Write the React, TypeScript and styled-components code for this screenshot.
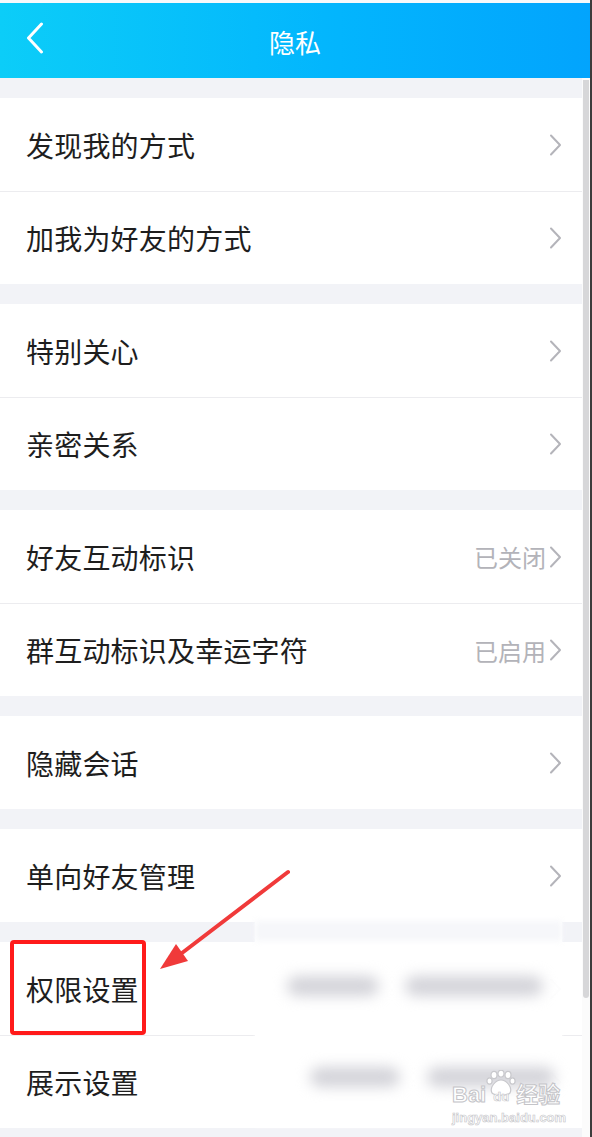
import React from "react";
import styled, { createGlobalStyle } from "styled-components";

interface RowData {
  label: string;
  value?: string;
}

const sections: RowData[][] = [
  [{ label: "发现我的方式" }, { label: "加我为好友的方式" }],
  [{ label: "特别关心" }, { label: "亲密关系" }],
  [
    { label: "好友互动标识", value: "已关闭" },
    { label: "群互动标识及幸运字符", value: "已启用" },
  ],
  [{ label: "隐藏会话" }],
  [{ label: "单向好友管理" }],
  [{ label: "权限设置" }, { label: "展示设置" }],
];

const Chevron = () => (
  <svg width="13" height="22" viewBox="0 0 13 22">
    <path d="M2 1.5 L11 11 L2 20.5" fill="none" stroke="#b4b4ba" strokeWidth="2" strokeLinecap="round" strokeLinejoin="round" />
  </svg>
);

const App = () => {
  return (
    <>
      <GlobalStyle />
      <StFrame>
        <StTopStrip />
        <StHeader>
          <StBack>
            <svg width="18" height="32" viewBox="0 0 18 32">
              <path d="M15.5 2 L2.5 16 L15.5 30" fill="none" stroke="#fff" strokeWidth="3" strokeLinecap="round" strokeLinejoin="round" />
            </svg>
          </StBack>
          <StTitle>隐私</StTitle>
        </StHeader>

        <StBody>
          <StContent>
            {sections.map((rows, i) => (
              <StSection key={i}>
                {rows.map((row, j) => (
                  <StRow key={row.label} $divider={j > 0}>
                    <StLabel>{row.label}</StLabel>
                    <StRight>
                      {row.value && <StValue>{row.value}</StValue>}
                      <Chevron />
                    </StRight>
                  </StRow>
                ))}
              </StSection>
            ))}
          </StContent>
          <StTrack>
            <StThumb />
          </StTrack>
        </StBody>

        {/* 가려진 영역 */}
        <StMask>
          <StMaskBand />
          <StBlurLine $top={64}>
            <StBlob $w={92} $ml={32} />
            <StBlob $w={138} $ml={26} />
          </StBlurLine>
          <StBlurLine $top={155}>
            <StBlob $w={90} $ml={55} />
            <StBlob $w={128} $ml={27} />
          </StBlurLine>
        </StMask>

        <StWatermark>
          <StWmTop>
            Bai
            <StPaw>
              <svg width="30" height="26" viewBox="0 0 30 26">
                <g fill="#fff" stroke="#c8c8cc" strokeWidth="1.2">
                  <ellipse cx="8" cy="5" rx="3" ry="3.6" />
                  <ellipse cx="15" cy="3.6" rx="3" ry="3.4" />
                  <ellipse cx="22" cy="5" rx="3" ry="3.6" />
                  <ellipse cx="3.5" cy="11" rx="2.6" ry="3.2" />
                  <ellipse cx="26.5" cy="11" rx="2.6" ry="3.2" />
                  <path d="M6 23 C3 17 10 10 15 10 C20 10 27 17 24 23 C21 26 9 26 6 23 Z" />
                </g>
              </svg>
              <StDu>du</StDu>
            </StPaw>
            经验
          </StWmTop>
          <StWmUrl>jingyan.baidu.com</StWmUrl>
        </StWatermark>

        <StMarkBox />
        <StArrow width="140" height="110" viewBox="150 865 140 110">
          <line x1="288" y1="872" x2="182" y2="953" stroke="#f03a3a" strokeWidth="4" strokeLinecap="round" />
          <polygon points="160,969 188,961 176,944" fill="#f03a3a" />
        </StArrow>
      </StFrame>
    </>
  );
};

export default App;

const GlobalStyle = createGlobalStyle`
  body {
    margin: 0;
    background: #ffffff;
    font-family: "Noto Sans CJK SC", "Noto Sans", sans-serif;
  }
`;

const StFrame = styled.div`
  position: relative;
  width: 590px;
  height: 1137px;
  overflow: hidden;
  display: flex;
  flex-direction: column;
  border-right: 2px solid #3c3c3c;
  background: #ffffff;
`;

const StTopStrip = styled.div`
  height: 3px;
  background: #f7f9fb;
`;

const StHeader = styled.div`
  position: relative;
  height: 75px;
  flex-shrink: 0;
  display: flex;
  align-items: center;
  justify-content: center;
  background: linear-gradient(90deg, #0ccdf8 0%, #03b6fd 55%, #02a4fd 100%);
`;

const StBack = styled.div`
  position: absolute;
  left: 26px;
  top: 19px;
  display: flex;
`;

const StTitle = styled.h1`
  margin: 0;
  color: #ffffff;
  font-size: 26px;
  font-weight: 400;
  line-height: 1;
  padding-top: 2px;
`;

const StBody = styled.div`
  flex: 1;
  display: flex;
  min-height: 0;
`;

const StContent = styled.div`
  flex: 1;
  display: flex;
  flex-direction: column;
  gap: 20px;
  padding-top: 20px;
  background: #f2f3f7;
`;

const StSection = styled.div`
  background: #ffffff;
`;

const StRow = styled.div<{ $divider: boolean }>`
  position: relative;
  height: 93px;
  display: flex;
  align-items: center;
  justify-content: space-between;
  padding: 0 20px 0 26px;
  box-sizing: border-box;
  border-top: ${(p) => (p.$divider ? "1px solid #ececef" : "none")};
`;

const StLabel = styled.span`
  font-size: 28px;
  color: #1e1e1e;
  letter-spacing: 0.2px;
`;

const StRight = styled.div`
  display: flex;
  align-items: center;
  gap: 3px;
`;

const StValue = styled.span`
  font-size: 24px;
  color: #b3b3b9;
`;

const StTrack = styled.div`
  width: 8px;
  background: #fbfbfb;
  padding-top: 2px;
`;

const StThumb = styled.div`
  margin-left: 1px;
  width: 6px;
  height: 918px;
  background: #d7d7d9;
  border-radius: 0 0 3px 3px;
`;

const StMask = styled.div`
  position: absolute;
  left: 255px;
  top: 912px;
  width: 307px;
  height: 215px;
  background: rgba(255, 255, 255, 0.97);
  box-shadow: 0 0 3px rgba(255, 255, 255, 0.9);
`;

const StMaskBand = styled.div`
  margin-top: 9px;
  height: 20px;
  background: #f6f7fa;
  filter: blur(3px);
`;

const StBlurLine = styled.div<{ $top: number }>`
  position: absolute;
  top: ${(p) => p.$top}px;
  left: 0;
  display: flex;
`;

const StBlob = styled.div<{ $w: number; $ml: number }>`
  width: ${(p) => p.$w}px;
  margin-left: ${(p) => p.$ml}px;
  height: 20px;
  border-radius: 10px;
  background: #d3d3d9;
  filter: blur(7px);
`;

const StWatermark = styled.div`
  position: absolute;
  left: 452px;
  top: 1070px;
  display: flex;
  flex-direction: column;
  align-items: flex-start;
  font-family: "Liberation Sans", "Noto Sans CJK SC", sans-serif;
  color: #ffffff;
  -webkit-text-stroke: 1px #c4c4c8;
`;

const StWmTop = styled.div`
  display: flex;
  align-items: flex-end;
  font-size: 22px;
  font-weight: 700;
  line-height: 22px;
  height: 36px;
`;

const StPaw = styled.span`
  position: relative;
  width: 30px;
  height: 36px;
  display: flex;
  justify-content: center;
  svg {
    position: absolute;
    top: 0;
    left: 0;
  }
`;

const StDu = styled.span`
  position: relative;
  align-self: flex-end;
  font-size: 13px;
  line-height: 13px;
  margin-bottom: 3px;
  -webkit-text-stroke: 0.6px #c4c4c8;
`;

const StWmUrl = styled.div`
  font-size: 13px;
  font-weight: 700;
  margin-top: 4px;
  -webkit-text-stroke: 0.6px #c4c4c8;
`;

const StMarkBox = styled.div`
  position: absolute;
  left: 10px;
  top: 940px;
  width: 136px;
  height: 95px;
  box-sizing: border-box;
  border: 4px solid #ff1a1a;
  border-radius: 4px;
`;

const StArrow = styled.svg`
  position: absolute;
  left: 150px;
  top: 865px;
`;
